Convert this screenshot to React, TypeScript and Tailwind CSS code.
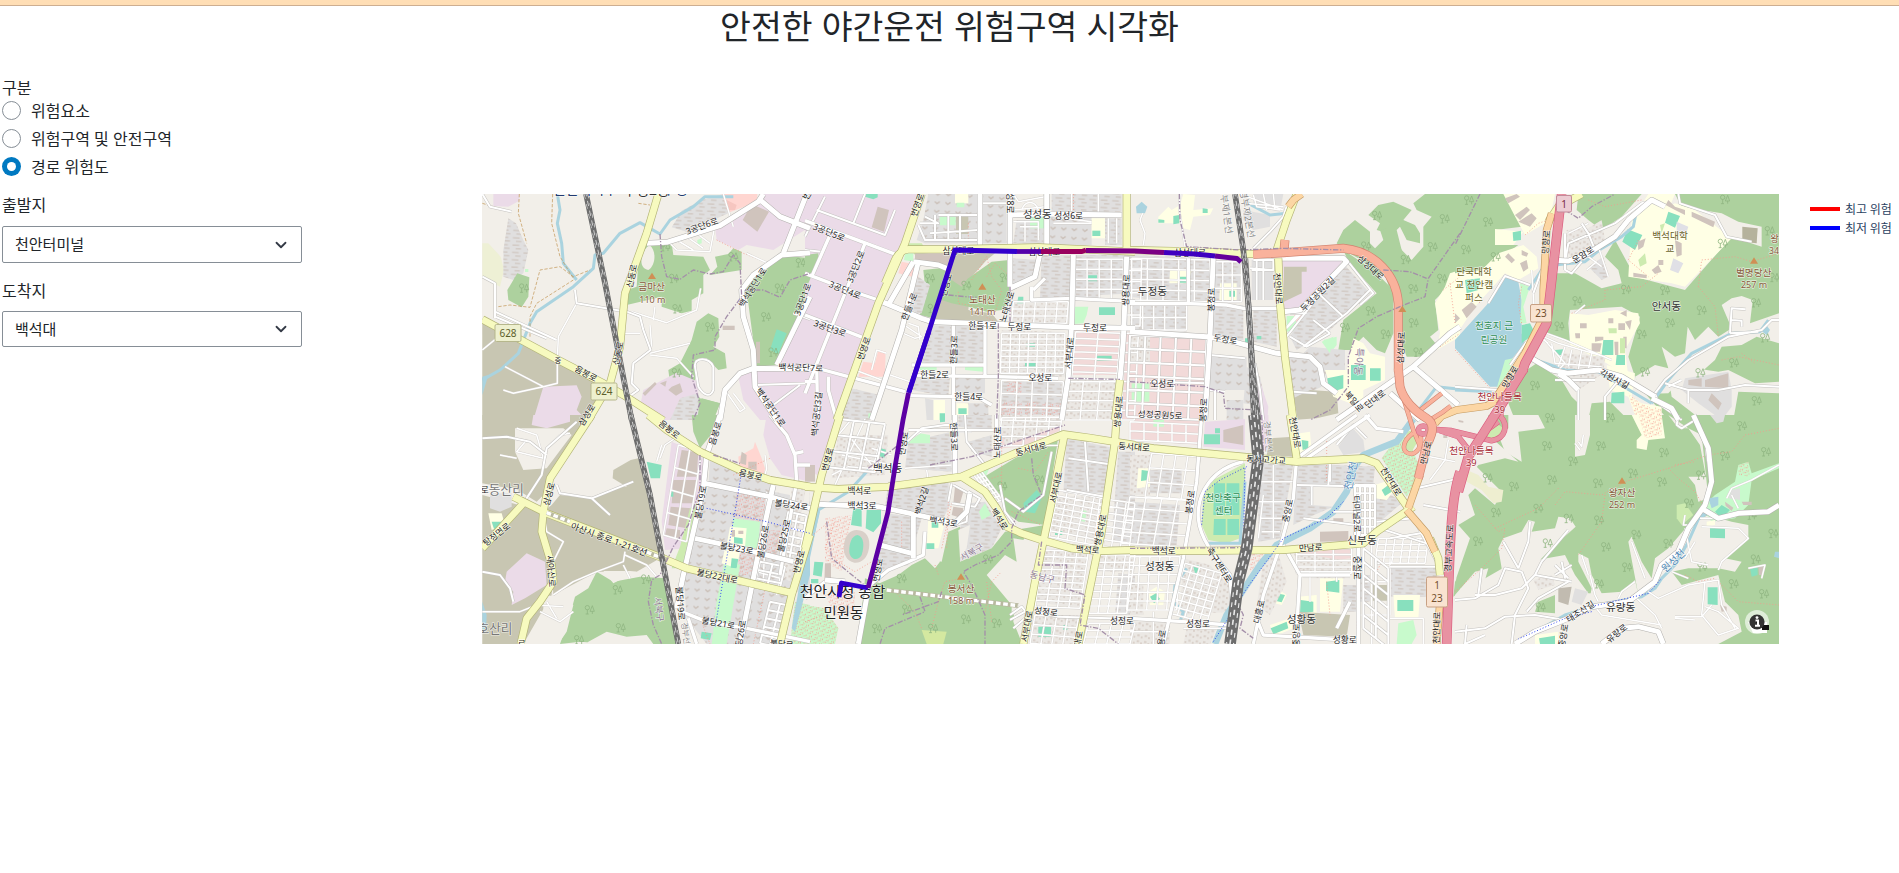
import React from "react";
import { ChevronDown } from "lucide-react";

type Road = [kind: string, d: string];
type Area = [fill: string, d: string];
type Label = [text: string, x: number, y: number, angle?: number, size?: number, color?: string];
type Tile = {
  x: number;
  y: number;
  areas: Area[];
  roads: Road[];
  labels: Label[];
  peaks?: [number, number][];
  trees?: [number, number][];
};

const FOREST = "#add19e";
const BROWN = "#c8c6b2";
const INDUSTRY = "#ebdbe8";
const GREY = "#e0dfdf";
const BLOCKS = "url(#blocks)";
const CHEVRONS = "url(#chevrons)";
const SHOPS = "url(#shops)";
const PARK = "#c8facc";
const PITCH = "#88e0be";
const SCHOOL = "#ffffe5";
const RETAIL = "#ffd6d1";
const PINK = "#f2dad9";
const BUILDING = "#d0c4bd";
const WATER = "#aad3df";
const LAND = "#f2efe9";

// Street lattice spanned by two vectors from a corner.
function grid(x: number, y: number, ux: number, uy: number, vx: number, vy: number, nu: number, nv: number) {
  let d = "";
  for (let i = 0; i <= nu; i++) {
    const a = i / nu;
    d += `M${x + ux * a} ${y + uy * a}l${vx} ${vy}`;
  }
  for (let j = 0; j <= nv; j++) {
    const b = j / nv;
    d += `M${x + vx * b} ${y + vy * b}l${ux} ${uy}`;
  }
  return d;
}

const kinds: { id: string; casing?: string; cw?: number; color: string; w: number; dash?: string }[] = [
  { id: "water", color: WATER, w: 9 },
  { id: "river", color: WATER, w: 20 },
  { id: "path", color: "#f39a8c", w: 2.5, dash: "3 6" },
  { id: "track", color: "#c49a5c", w: 2.2, dash: "10 5" },
  { id: "n", casing: "#d2cfcb", cw: 6.5, color: "#fff", w: 4.5 },
  { id: "m", casing: "#c4c2bf", cw: 9, color: "#fff", w: 6 },
  { id: "r", casing: "#c4c2bf", cw: 13, color: "#fff", w: 10 },
  { id: "t", casing: "#b3b1ae", cw: 18, color: "#fff", w: 15 },
  { id: "s", casing: "#b4b577", cw: 24, color: "#f7fabf", w: 20 },
  { id: "pr", casing: "#c39a62", cw: 23, color: "#fcd6a4", w: 19 },
  { id: "ramp", casing: "#d18470", cw: 14, color: "#f9b29c", w: 11 },
  { id: "mr", casing: "#dc5d7f", cw: 17, color: "#e892a2", w: 14 },
  { id: "tr", casing: "#d18470", cw: 27, color: "#f9b29c", w: 23 },
  { id: "mw", casing: "#dc5d7f", cw: 29, color: "#e892a2", w: 25 },
  { id: "dash", casing: "#b9b9a0", cw: 14, color: "#fff", w: 10, dash: "14 8" },
  { id: "bound", color: "#a48fa9", w: 4, dash: "16 5 4 5" },
  { id: "cycle", color: "#3347ee", w: 3, dash: "3 6" },
  { id: "rail", color: "#6d6d6d", w: 17 },
  { id: "railw", color: "#6d6d6d", w: 35 },
];

const tiles: Tile[] = [
  {
    x: 480,
    y: 190,
    areas: [
      [INDUSTRY, "M40 12H118V32L85 50L40 48Z"],
      ["#eef0d5", "M7 160L25 160L62 200L72 240L60 290L7 262Z"],
      [BLOCKS, "M85 85L108 100L130 150L145 180L130 250L100 270L70 260V180Z"],
      [FOREST, "M112 250L148 262L145 320L125 352L85 330L82 300Z"],
      [BROWN, "M7 400L140 455L380 580L330 690H7Z"],
      [INDUSTRY, "M190 590L290 586L305 620L290 660L320 690H160L175 640Z"],
      [WATER, "M7 560L25 555L7 615Z"],
      [FOREST, "M490 165L535 152L575 160L580 195L670 200L690 240L670 255V310L635 330V362L605 370L545 350V320L440 345V300L470 290L475 215Z"],
      [LAND, "M508 165C530 180 528 225 505 240C470 235 485 180 508 165Z"],
      [FOREST, "M705 200L745 192L760 175L785 185V240L690 255L712 230Z"],
      [FOREST, "M685 370L715 385L718 440L700 470L735 490L740 535L715 540L680 505L645 510V600L660 625L720 640L700 690H635L648 610L615 575L570 578L565 540L600 520L635 450L650 395Z"],
      [FOREST, "M990 205L905 196L860 235L790 290L805 340L830 530L890 525L990 290Z"],
      [PITCH, "M890 418L920 430L895 492L870 480Z"],
      [BUILDING, "M828 455L840 455V520L828 520ZM728 407H764V420H728Z"],
      [BLOCKS, "M605 62L665 30L730 12L745 70L620 125L575 112Z"],
      [INDUSTRY, "M730 90L835 40L850 12H990V110L880 180L800 165L775 180L710 150L705 110Z"],
      [RETAIL, "M725 12H832V35L745 68Z"],
      [BUILDING, "M815 42L867 65L832 125L788 90Z"],
      [INDUSTRY, "M950 400L990 370V690H840L790 630L775 560L800 540H890Z"],
      [INDUSTRY, "M490 600L590 548L655 575L655 690H545L480 650Z"],
      [BUILDING, "M575 590L600 580L608 605L588 617L565 600ZM488 610L525 576L530 582L495 618ZM540 580L560 572L556 590Z"],
      [BLOCKS, "M570 690L600 625L655 610V690Z"],
      [FOREST, "M665 625L720 640L700 690H650Z"],
      ["#f6c6c0", "M740 30L770 45L765 60L740 60Z"],
      [PARK, "M652 150L665 145V160L652 164ZM135 237H145V246H135Z"],
    ],
    roads: [
      ["water", "M232 12L240 60L232 100L245 160L250 220L290 270"],
      ["water", "M7 570L60 540L115 490L150 400L170 365L280 290L340 235L345 195L370 190L420 130L480 98L510 115L540 132L570 90L640 50L675 20H760"],
      ["rail", "M318 12L375 280L455 690"],
      ["s", "M535 12L500 130L435 310L420 470L390 580L325 690"],
      ["s", "M7 388L235 510L370 580L430 615L550 692"],
      ["t", "M500 160L560 157L720 107L835 35L850 12M835 25L900 80L990 115M980 12L910 190"],
      ["t", "M990 188L905 195L820 255L785 300L790 380L820 480L825 590L890 690M990 320L890 525M720 690L735 600L780 550L820 535L990 537"],
      ["m", "M285 300L290 340L440 365L480 380L490 420L512 480L460 520L455 580L475 600L440 625M45 365L230 450M7 260L45 280V385M45 380L200 445M7 12L30 50L95 65"],
      ["n", "M290 340L235 440L232 510V580L190 590L75 530M190 590L100 610L70 600M7 480L80 420M430 430L480 430M510 490L570 475L630 460M455 365L560 398L650 360L662 295M510 495L590 505L640 560M560 150L590 180L690 185L702 120M590 150L640 180M620 140L670 175M650 130L690 160M510 405L515 470M520 390L525 350"],
      ["m", "M645 530C640 500 690 500 700 530V600C690 625 670 615 655 590ZM830 585L990 580M860 660L960 585M940 370L990 388"],
      ["n", "M730 12L760 110M800 190L865 220L840 235M735 600L780 665L795 655L760 610"],
      ["track", "M118 12L115 70L140 160M218 12L215 100L240 200L280 265M55 350L90 345L150 352L180 240L240 230L280 260L330 240M150 440V380L170 340L280 270M7 40L80 62M475 40L510 45"],
      ["path", "M710 150L740 165L790 190L830 205"],
      ["bound", "M540 132L545 200L560 260L600 268L640 240L690 252L730 245L760 195L780 220L785 320L740 380L705 440V480L640 495L635 560L660 640L640 690M795 300L850 300L900 322L930 270L990 250"],
    ],
    labels: [
      ["3공단6로", 666, 108, -20],
      ["산동로", 455, 258, -78],
      ["산동로", 414, 490, -78],
      ["음봉로", 318, 551, 28],
      ["백석공단1로", 818, 292, -58],
      ["3공단1로", 968, 328, -70],
      ["백석공단7로", 962, 533, 2],
      ["백석공단1로", 872, 652, 55],
      ["중", 234, 511, 0, 22],
      ["번영로", 992, -4, -60],
      ["금마산", 515, 291, 0, 29, "#8a5a3a"],
      ["110 m", 517, 328, 0, 27, "#8a5a3a"],
      ["부성2동", 500, 0, 0, 42, "#333"],
      ["천안서북구", 315, -4, 0, 42, "#223a70"],
      ["부성", 585, -4, 0, 42, "#223a70"],
    ],
    peaks: [[516, 258]],
    trees: [[132, 294], [556, 170], [582, 265], [592, 356], [690, 410], [590, 548], [760, 200], [962, 218], [899, 294], [858, 380], [880, 486]],
  },
  {
    x: 480,
    y: 415,
    areas: [
      [BROWN, "M7 0H340L235 160L200 230L170 260L105 220L60 215L7 205Z"],
      [BROWN, "M7 240L190 290L185 350L220 440L215 540L180 600L130 687H7Z"],
      [LAND, "M105 40H250L275 60L200 160L130 165L105 110Z"],
      [INDUSTRY, "M160 0H270V20L200 40L155 30Z"],
      [LAND, "M345 0H450L475 130L400 165V190L440 210L350 245L235 240L240 150Z"],
      [BROWN, "M240 240L330 250L430 215L500 220L540 430L470 470L350 470L220 540L215 450L190 340V290L215 270Z"],
      [BROWN, "M452 135L475 130L515 250L440 215L398 190L400 165Z"],
      [LAND, "M470 0H510L590 80L550 330L520 260Z"],
      [PITCH, "M500 140L545 150L540 190H512Z"],
      [INDUSTRY, "M575 80L670 120L665 230L625 400L555 405L545 320Z"],
      [BUILDING, "M605 105L655 112L650 185H590ZM580 195H648L640 265H575ZM572 275L635 280L620 340L565 330ZM560 340L600 345V370L555 360Z"],
      [PITCH, "M572 228H580V245H572Z"],
      ["#cdebb0", "M630 280L655 260L610 460H575L600 395Z"],
      [INDUSTRY, "M80 470L140 415L195 440L200 510L135 550L95 570L100 530L75 500Z"],
      ["#e0dfdf", "M30 235H95V275L60 290L30 280Z"],
      [SCHOOL, "M25 295H65L75 330L35 345Z"],
      [PITCH, "M35 320H65V335L42 342Z"],
      [WATER, "M7 560L20 600L18 650L7 640Z"],
      [FOREST, "M350 470L400 500L480 485L560 490L590 687H390L300 680L240 687L270 600L285 545L325 520Z"],
      [LAND, "M370 468H450L470 470L400 505ZM325 680L380 650L440 665L500 660L520 687H320Z"],
      [LAND, "M190 540L240 545L280 570L260 650L235 687H140L190 590Z"],
      [FOREST, "M635 0H715L700 50L660 100L640 50Z"],
      [RETAIL, "M775 125L820 100L825 80L845 130L855 160L850 190L780 180Z"],
      [BUILDING, "M785 110L800 120L798 150L780 145ZM805 140H830V165L805 160Z"],
      [INDUSTRY, "M860 0H990V200L905 180L870 130L850 60Z"],
      [CHEVRONS, "M690 130L780 170L990 225V540L620 455L650 330L685 215Z"],
      [CHEVRONS, "M610 470L940 545L900 687H680L620 610Z"],
      ["url(#dots)", "M770 215L880 245L865 325L765 310ZM760 310L835 335L825 480L770 480ZM865 345L900 345L890 420L840 420Z"],
      [PARK, "M760 310L840 320L835 400H790L750 400ZM735 430L780 450L740 687H695L710 560Z"],
      [SCHOOL, "M750 335L800 340L795 395L740 390ZM735 400L780 410L770 460L725 445Z"],
      [PITCH, "M762 366L788 370V387L762 385ZM755 430L775 432L770 460L752 458ZM665 650L695 655L690 675L662 670Z"],
      [BUILDING, "M755 345H765V365H755ZM775 347H790V357H775Z"],
      [LAND, "M880 190L990 225L985 360L920 420L930 240L880 230Z"],
      [SHOPS, "M940 190L980 205L930 500L900 480Z"],
      [PARK, "M945 560L990 570V687H930Z"],
      ["url(#dots)", "M945 560L990 570V687H930Z"],
      [WATER, "M980 390H990V480L945 650L935 640Z"],
    ],
    roads: [
      ["m", "M7 70L80 65L150 80L200 120M230 210L240 235L335 250L460 200M335 250L390 300M290 20L200 100L185 180L130 265M7 470L60 480L90 520L100 560"],
      ["n", "M110 40L170 60L190 130L110 110L140 75M110 130L60 120M200 100L240 60L270 55M190 290L200 350L250 380L220 440M7 590L120 590L170 570L250 575M180 590L240 620L280 590M200 560L230 610M435 410L430 440L350 470L280 500L220 540M435 420L500 450L530 485M430 450L450 490M540 130L555 90L600 60M530 140L545 90"],
      ["n", grid(595, 90, 70, 20, -45, 270, 2, 4)],
      ["n", "M855 120L860 160L850 200M620 470L720 490M860 230L850 500M830 470L900 490L890 540"],
      ["m", grid(840, 440, 75, 15, -18, 75, 2, 3)],
      ["m", grid(870, 560, 60, 12, -30, 125, 2, 5)],
      ["m", grid(925, 290, 55, 12, -25, 140, 2, 6)],
      ["rail", "M452 0L510 240L595 687"],
      ["s", "M335 0L210 190L190 290L185 350L215 450L220 500L180 560L140 610L122 687"],
      ["s", "M7 400L130 265M100 245L200 295L550 430L620 460L940 535"],
      ["s", "M505 0L560 45L660 110L780 165L870 195L990 215"],
      ["s", "M990 360L935 540L900 687"],
      ["dash", "M200 293L270 320M460 395L560 435"],
      ["t", "M720 0L680 120L670 220L640 350L610 480L590 580M675 205L870 245L990 280M645 370L760 395L940 440M880 210L830 440L790 640L780 687"],
      ["r", "M605 590L680 620L800 640L990 680M870 0L920 60L945 120L950 200M970 110L945 115M950 150L990 150M950 200L900 480M625 610L650 687"],
      ["path", "M760 180L870 130M860 500L820 687M660 610L690 687"],
      ["cycle", "M785 170L765 290L740 430L705 640M680 280L860 320L990 355"],
      ["bound", "M660 120V220L625 330L580 395L540 480L515 495L505 560L520 630L545 687M700 120L780 145"],
    ],
    labels: [
      ["삼성로", 320, 0, -58],
      ["삼성로", 207, 237, -75],
      ["새아산로", 213, 468, 85],
      ["탕정면로", 50, 358, -38],
      ["로", 14, 225],
      ["동산리", 79, 222, 0, 38, "#777"],
      ["호산리", 45, 639, 0, 38, "#777"],
      ["아산시 종로 1-21호선", 387, 373, 20, 27],
      ["음봉로", 568, 43, 38],
      ["음봉로", 812, 180, 13],
      ["음봉로", 706, 55, -72],
      ["불당19로", 662, 262, -80],
      ["불당24로", 934, 270, 8],
      ["불당26로", 849, 380, -80],
      ["불당25로", 912, 362, -77],
      ["불당23로", 770, 400, 10],
      ["불당22대로", 712, 484, 12],
      ["불당19로", 601, 565, 85],
      ["불당21로", 715, 624, 10],
      ["불당26로", 780, 665, -80],
      ["불당로", 905, 687, 5],
      ["번영로", 957, 440, -75],
      ["서북구", 537, 583, 83, 27, "#8e7a94"],
      ["경부선", 617, 655, 82, 24, "#888"],
      ["로", 125, 688],
    ],
    trees: [[498, 492], [413, 524], [329, 584], [422, 638], [297, 674]],
  },
  {
    x: 805,
    y: 190,
    areas: [
      [INDUSTRY, "M0 12H350L300 170L220 340L90 690H0Z"],
      [FOREST, "M0 195L40 190V210L10 280H0Z"],
      [BUILDING, "M218 50L252 60L237 125L200 112Z"],
      [PITCH, "M175 12H218V22L205 28L180 20Z"],
      [CHEVRONS, "M370 12H525V160H360L335 150L355 90Z"],
      [SCHOOL, "M450 12H490V40H450Z"],
      [PARK, "M404 80H452V106H404ZM455 38H478V52H455Z"],
      [BROWN, "M453 80H490V132H453Z"],
      [CHEVRONS, "M530 12H605V160H530Z"],
      [CHEVRONS, "M735 80H860V165H735Z"],
      [BLOCKS, "M740 12H950V65H740Z"],
      [BLOCKS, "M635 90H715V160H625Z"],
      [PARK, "M675 80H718V115H675Z"],
      [SCHOOL, "M860 85H900V145H860Z"],
      [PITCH, "M862 122H886V138H862Z"],
      [BLOCKS, "M900 85H950V165H900Z"],
      ["#cdebb0", "M300 160L350 160L370 190L330 195Z"],
      [RETAIL, "M290 215L340 225V265L280 250ZM220 480L260 490L240 560L160 560L175 515L210 520Z"],
      [PARK, "M300 190H325V215L297 210Z"],
      [BUILDING, "M330 190H435L440 225H330Z"],
      [FOREST, "M355 240L430 232L385 385L345 375L360 290Z"],
      [BLOCKS, "M340 260L375 285L350 370L335 370L310 350Z"],
      [BROWN, "M440 190H570L545 210L500 260L490 360L560 370L580 395H385Z"],
      [FOREST, "M490 265L560 215L612 210V335L590 360L545 365L490 350L440 340L410 330L430 245L440 260Z"],
      [BROWN, "M440 190H540L500 250L470 290L425 260Z"],
      [BLOCKS, "M620 205L700 210V265L620 290Z"],
      [BLOCKS, "M710 195H990V310L705 325Z"],
      [LAND, "M245 345L345 395L300 600L240 560Z"],
      [BLOCKS, "M370 405L535 410V525L340 525Z"],
      [LAND, "M540 410H580V560H540Z"],
      [BLOCKS, "M330 560H435L430 620L320 600Z"],
      [CHEVRONS, "M450 565H540V610L450 610ZM480 640H550V690H480Z"],
      [PARK, "M345 530H395V540H345ZM480 528H535V545L480 540Z"],
      [SCHOOL, "M385 630H420V690H385ZM455 640H490V690H455Z"],
      [PITCH, "M404 670H420V690H404ZM460 655H485V672H460ZM640 320L655 320V345H635Z"],
      [BLOCKS, "M120 590L225 615L200 690H90Z"],
      [PARK, "M190 670H205V685H190Z"],
      [SHOPS, "M590 420L780 425V560H590Z"],
      [PITCH, "M660 515H692V535H660ZM665 460H690V470H665Z"],
      [SHOPS, "M620 340H790V400H620Z"],
      [BLOCKS, "M780 280H880V325H780Z"],
      [PARK, "M808 350H850L845 375L835 400L808 402Z"],
      [PITCH, "M882 352H930V375H882ZM848 256H876V274H848Z"],
      [PINK, "M810 420L945 425L940 555H800Z"],
      [PINK, "M965 425H990V690H950Z"],
      [PITCH, "M875 497H920V512H875ZM872 580H915V625H868Z"],
      [BLOCKS, "M585 575L770 575V690H585Z"],
      ["url(#dots)", "M605 570H650V615H605ZM585 635H650V675H585ZM660 635H700V680H660ZM710 640H770V680H710Z"],
      [SHOPS, "M780 570H930V690H780Z"],
      [GREY, "M360 625L385 630V690H365Z"],
    ],
    roads: [
      ["m", "M0 140L60 20M35 60L240 135L270 60M145 100L180 12M0 180L50 185"],
      ["r", "M0 92L130 140L290 200M180 160L0 610M75 135L20 260M0 250L130 300L220 330M0 375L180 445M35 520L38 690M0 525L130 560L300 605M0 575L40 575M70 560L70 600L95 690"],
      ["t", "M340 215L290 420L200 690M230 335L350 385L380 395M325 215L400 225L425 235M250 345L325 215"],
      ["n", "M290 400L350 440L330 445L295 430M310 400L340 410L345 450M200 540L215 480L245 490M240 550L315 575M150 540L230 570"],
      ["m", "M345 100L400 100L360 80M400 75H525M375 130L520 120M340 105L360 150H520M390 75V150M430 75V150M465 75V150M605 40H530"],
      ["n", "M625 12L640 35L720 20M625 60L720 50M650 60C660 30 690 30 700 60M745 80L860 95M745 100H860M880 12V80M800 12V70M910 85V160M935 85V160M625 95H700V150M645 110H700M660 95V155"],
      ["t", "M525 12V165M615 12V290M725 12V165M615 75L740 72L950 75M615 295L690 260L705 190"],
      ["t", "M385 395L560 402L800 412L990 415M805 195L800 400L790 560L770 690M965 200L955 450L945 570"],
      ["n", grid(590, 430, 190, 0, -4, 120, 7, 7)],
      ["n", grid(625, 335, 165, 0, -5, 65, 5, 3)],
      ["n", grid(810, 208, 145, 0, 0, 120, 4, 4)],
      ["n", grid(970, 208, 40, 0, -5, 200, 1, 6)],
      ["n", grid(812, 425, 135, 5, -12, 140, 2, 7)],
      ["n", grid(590, 570, 185, 5, -5, 120, 4, 3)],
      ["n", grid(785, 575, 150, 0, -10, 115, 3, 4)],
      ["n", grid(960, 430, 40, 0, -12, 260, 1, 9)],
      ["r", "M320 525H540M330 557L580 560M310 617L440 620L520 622L560 645M445 405V690M540 410V560M580 560L760 565M680 290V330L800 325L990 335M685 300L720 265"],
      ["s", "M965 12V175M945 570L930 690"],
      ["s", "M350 12L300 160L220 340L95 690"],
      ["s", "M240 280L270 210C280 190 290 180 310 178L420 178L700 172L990 185"],
      ["path", "M500 270L545 200L560 260L590 300L570 370L520 350L460 340V300M545 260L570 220L605 250M580 400L540 380M490 100V155M805 12V60"],
      ["bound", "M580 400V560L575 690M790 565L945 568M615 290V400M430 315L480 320L520 322"],
    ],
    labels: [
      ["3공단5로", 72, 127, 22],
      ["3공단2로", 152, 230, -68],
      ["3공단4로", 120, 300, 22],
      ["3공단3로", 75, 415, 20],
      ["번영로", 337, 45, -70],
      ["번영로", 177, 475, -70],
      ["한들1로", 313, 350, -68],
      ["번영로", 423, 285, -75],
      ["한들1로", 533, 408],
      ["두정로", 643, 411],
      ["두정로", 870, 414],
      ["노태산로", 606, 350, -73],
      ["한들3로", 447, 479, -88],
      ["서부대로", 793, 489, -85],
      ["쌍용대로", 963, 300, -88],
      ["오성로", 706, 564],
      ["한들2로", 389, 556],
      ["한들4로", 491, 622],
      ["쌍용대로", 940, 665, -85],
      ["백석공단3길", 35, 672, -84],
      ["삼성대로", 460, 183],
      ["삼성대로", 718, 187],
      ["성성6로", 791, 78],
      ["성성8로", 614, 27, 90],
      ["성성동", 697, 72, 0, 31, "#333"],
      ["노태산", 532, 328, 0, 29, "#8a5a3a"],
      ["141 m", 532, 364, 0, 27, "#8a5a3a"],
    ],
    peaks: [[532, 290]],
    trees: [[375, 264], [484, 286], [599, 262], [383, 355]],
  },
  {
    x: 805,
    y: 415,
    areas: [
      [INDUSTRY, "M0 0H110L40 180L0 170Z"],
      [BUILDING, "M0 150H30V200H0Z"],
      [SHOPS, "M100 60L250 60L240 180L80 190Z"],
      [PITCH, "M228 100L243 104L238 128L224 124ZM405 0H420V20L405 22Z"],
      [BLOCKS, "M310 80L440 50V170L300 160Z"],
      [PARK, "M300 90L345 55L375 60V85L310 85Z"],
      [BLOCKS, "M460 0H560V45L460 35ZM490 80L560 60V125L500 110Z"],
      [PINK, "M590 0H770V45L650 95L590 100Z"],
      [SHOPS, "M580 0H770V30L600 90Z"],
      [BLOCKS, "M250 200L430 195L435 270L415 310L240 280Z"],
      [BUILDING, "M445 275L475 280L470 310L440 300ZM450 215L475 230L465 265H445Z"],
      [BLOCKS, "M490 265L540 260L590 340L560 400L460 440L465 340Z"],
      [PARK, "M540 265L558 300L530 315L522 290ZM520 170L555 155L540 190Z"],
      [FOREST, "M530 190L630 130L760 65L720 330L640 320L600 290L590 240L560 225Z"],
      [FOREST, "M600 350L720 330L715 380L660 360L635 445L600 430L580 470L550 480L630 570L625 620L645 670V687H160L190 520L280 480L320 450L360 430L410 440L430 350L465 335V440L560 400Z"],
      [FOREST, "M180 490L240 510L190 520L200 560L240 530L200 640L160 687Z"],
      [LAND, "M625 370L690 380L700 470L680 580L620 600V570L545 480L600 420L635 440Z"],
      [LAND, "M360 430L390 410L405 440L390 460ZM460 345L495 330L485 400L465 430Z"],
      [PITCH, "M655 265L695 225L712 245L690 295L660 290Z"],
      [PITCH, "M185 285L228 285V325L205 352L182 340ZM145 280L170 280V335L138 330Z"],
      ["url(#dots)", "M60 310L140 300L110 470L60 440Z"],
      [SCHOOL, "M370 310L420 320L400 400L365 400Z"],
      [PITCH, "M364 385H388V402H364ZM380 320H400V338H380Z"],
      [BLOCKS, "M245 295L350 310L310 450L210 470Z"],
      [PITCH, "M28 440L55 442L50 485L24 480ZM18 492H40V505H18Z"],
      [BUILDING, "M60 445H78V500H58Z"],
      [PARK, "M0 570L60 580L100 640L90 687H0Z"],
      ["url(#dots)", "M0 570L60 580L100 640L90 687H0ZM60 540L150 520V600H90Z"],
      ["#d4e8a0", "M350 645L425 650L415 687H365Z"],
      [WATER, "M0 400L40 280L45 290L10 440Z"],
      [BLOCKS, "M785 70L930 100L905 235H775Z"],
      [SHOPS, "M760 240L900 250L870 380L740 350Z"],
      [PARK, "M828 285L845 288L840 320L825 318ZM935 310H950V328H935Z"],
      [SHOPS, "M720 400L850 410L820 580L690 560Z"],
      [BLOCKS, "M940 475L990 480V600H930Z"],
      [SHOPS, "M890 400H990V470H870Z"],
      [SHOPS, "M680 600H830L815 687H670Z"],
      [PITCH, "M700 635H738V665H700ZM775 630H787V645H775ZM750 348H772V360H750Z"],
      [BLOCKS, "M940 110H990V380H920Z"],
      ["#d9d0c9", "M155 345C185 345 197 370 192 400C187 430 170 445 148 443C125 440 112 415 118 385C122 360 135 345 155 345Z"],
      [PITCH, "M158 360C178 365 178 395 170 420C160 440 135 435 133 410C132 385 140 362 158 360Z"],
    ],
    roads: [
      ["water", "M190 165L130 230L40 285L10 430"],
      ["m", grid(100, 12, 140, 15, -30, 145, 3, 3)],
      ["n", "M130 60L200 150M180 12L90 210M240 30L200 170M110 120L260 150M80 180L130 155L270 165M140 12L100 60M200 100L260 120M300 160L440 150M365 165L370 200M300 80L350 50L430 45M440 50H500"],
      ["m", "M290 95L350 40L420 30H450M310 45H575M480 0L485 80L540 150"],
      ["n", grid(590, 8, 180, -2, -8, 85, 5, 3)],
      ["n", grid(505, 178, 25, -8, 62, 85, 3, 7)],
      ["m", "M440 205L430 260M445 210L490 235L485 320L440 335M440 265L510 275L525 250L490 230M585 210L600 290L630 330M600 250L655 290L715 240L740 110"],
      ["t", "M450 0V180M40 268L220 275L360 305L450 325L485 290L495 235M325 300V430M225 390L320 415M190 520L160 687M60 495L120 500"],
      ["r", "M195 510L250 465L310 440L355 420L360 350M0 550L60 500M575 0V100"],
      ["s", "M105 0L50 180L0 400"],
      ["s", "M0 215L100 222L250 215L470 185L630 115L775 58L850 68L990 90"],
      ["s", "M470 185L540 230L575 280L605 335L650 355L710 375L800 400L880 408L990 405"],
      ["s", "M778 60L740 260L690 500L655 687M935 0L930 80L890 350L820 687"],
      ["dash", "M245 525L640 572"],
      ["n", grid(760, 225, 135, 25, -28, 140, 5, 8)],
      ["n", grid(715, 405, 135, 5, -25, 170, 4, 9)],
      ["n", grid(885, 250, 105, 15, -18, 140, 4, 7)],
      ["n", grid(875, 420, 115, 0, -25, 175, 4, 8)],
      ["n", grid(690, 600, 130, 10, -15, 85, 4, 3)],
      ["n", grid(850, 625, 140, 0, -15, 62, 4, 3)],
      ["m", "M790 130L930 150M840 80L850 230M785 225L900 245M690 590L760 605L990 612M615 600L650 575L670 600M615 615L660 590M625 640L660 610"],
      ["path", "M590 80V240L620 270M560 190L590 180M640 160L690 170L730 110M620 290L710 330M390 450L400 480M270 530L330 590L350 640M470 490L420 500L400 560L380 640M540 590L560 500L590 470M290 320V400M430 260L425 400M0 620L60 600M440 265L410 400"],
      ["path", "M560 620L545 500M90 320L60 400L100 440L150 470L200 440M0 380L60 330"],
      ["bound", "M190 160L280 90M375 150L500 125L780 30M680 130L685 180L710 240L640 290L620 340L620 380L580 420L510 450L475 470L500 510L540 600V687M65 320L80 430L190 520M345 545L360 590L240 640L225 687M410 530L400 560L290 600M710 380L700 450H785L780 520L840 540L825 630L880 640L940 687"],
    ],
    labels: [
      ["번영로", 68, 133, -75],
      ["백석로", 163, 229],
      ["백석3로", 171, 272],
      ["백석3로", 416, 320, 8],
      ["백석2길", 350, 257, -73],
      ["백석로", 583, 312, 58],
      ["백석로", 848, 404, 5],
      ["한들3로", 447, 65, 88],
      ["노태산로", 577, 82, -88],
      ["동서대로", 678, 102, -15],
      ["서부대로", 753, 217, -78],
      ["서부대로", 666, 634, -80],
      ["쌍용대로", 886, 345, -78],
      ["쌍용대로", 816, 695, -80],
      ["성정로", 723, 590, 8],
      ["성정로", 951, 617],
      ["번영로", 295, 85, -80],
      ["번영로", 218, 465, -80],
      ["백석동", 248, 158, 0, 32, "#333"],
      ["서북구", 500, 411, -30, 27, "#8e7a94"],
      ["동남구", 712, 486, 15, 28, "#8e7a94"],
      ["봉서산", 468, 522, 0, 29, "#8a5a3a"],
      ["158 m", 468, 558, 0, 27, "#8a5a3a"],
      ["천안시청 종합", 113, 529, 0, 44.5, "#222"],
      ["민원동", 115, 592, 0, 43, "#222"],
    ],
    peaks: [[468, 485]],
    trees: [[592, 213], [704, 194], [290, 490], [549, 432], [306, 582], [483, 612], [575, 624], [216, 640], [384, 640]],
  },
  {
    x: 1130,
    y: 190,
    areas: [
      [SCHOOL, "M85 80L115 50L125 60L150 45L160 12L195 15L190 60L250 55L240 75L190 80L180 120L160 115L150 100L85 100Z"],
      [PITCH, "M130 78L148 75V100L130 103ZM218 55L233 57V69H218ZM85 88L103 90V98H85Z"],
      [WATER, "M18 50L35 35L52 50L45 70H20Z"],
      [FOREST, "M640 120L675 90L720 125V160L735 175L740 230L765 245L740 260L695 210L640 180L620 160Z"],
      [FOREST, "M715 75L745 45L790 35L845 60L820 90L855 105L870 130L870 160L830 150L810 110L800 120L815 180L840 220L790 180L775 130L740 120L750 100Z"],
      [FOREST, "M850 40L885 12H990V240L960 255L945 300L915 330L925 420L900 440L925 470L880 500L830 500L800 420L790 330L760 240L735 215L730 180L760 150L750 120L770 115L800 150L815 180L845 210L880 170L880 110L905 80L860 60Z"],
      [FOREST, "M640 180L730 240L790 300V430L765 490L740 480L700 440L660 480L625 480L640 390L740 310L655 215Z"],
      [INDUSTRY, "M455 205H640L610 260L510 360H460Z"],
      [BROWN, "M462 230H530V245H515V310L462 335Z"],
      [PARK, "M470 378H500V420L470 425ZM580 450L620 440V465L600 490Z"],
      [RETAIL, "M490 370L540 350L500 400Z"],
      [BLOCKS, "M0 195L250 205V330L160 340L0 320Z"],
      [BLOCKS, "M0 345L170 340V425L0 420Z"],
      [BLOCKS, "M240 345H340V450L250 440Z"],
      [BLOCKS, "M250 210H330V340H250Z"],
      [GREY, "M365 210H430V330H365Z"],
      [BLOCKS, "M370 360H440V470L370 455Z"],
      [SCHOOL, "M120 240H185L175 280H118ZM270 280H320V330H268Z"],
      [PITCH, "M150 260H173V278H150ZM298 302H315V320H298Z"],
      [PINK, "M0 435L235 445L220 690H0Z"],
      [SHOPS, "M0 440H60V520H0Z"],
      [PARK, "M5 580H58V635H5Z"],
      [CHEVRONS, "M240 500L350 500V600L235 600ZM460 500L560 510L575 590L490 630ZM290 630H340V690H290Z"],
      [CHEVRONS, "M540 470L645 480V570L600 590L575 530L520 490Z"],
      [CHEVRONS, "M350 530L390 560L410 650L340 640Z"],
      [INDUSTRY, "M385 560L415 650L412 690H380Z"],
      [BROWN, "M490 625L540 600L620 605L625 670L560 685L490 690Z"],
      [SCHOOL, "M670 445L700 460L720 490L765 500V570L700 600V640L660 640L610 620L585 540L650 540Z"],
      [PITCH, "M592 565L640 555V595L615 603L595 590ZM720 535H752V572H720ZM663 525H707V570H663Z"],
      [BLOCKS, "M560 300L640 220L720 310L600 420L500 480L480 440Z"],
      [PARK, "M575 455L610 440L600 490Z"],
      [SCHOOL, "M945 290L960 250L990 240V440L920 480L930 430L915 340Z"],
      [WATER, "M975 455L990 440V490Z"],
      [GREY, "M370 12H460L450 65L370 50ZM340 60L420 75V110L370 120L340 90Z"],
      [PITCH, "M345 445H360V460H345ZM380 438H394V448H380Z"],
    ],
    roads: [
      ["n", "M40 165L45 130L30 90L38 70M150 12L148 60L165 170M330 12L460 60M370 15L380 50L450 60M400 12L410 60M430 12L435 60M345 40L460 50"],
      ["water", "M355 40L420 75L470 70M830 665L870 655L920 590L990 598"],
      ["m", "M370 175L420 125L460 80L470 50M370 210H430V240L360 235M380 210V330M400 210V330M365 240H430M480 370L530 370M550 390L600 430"],
      ["n", grid(5, 205, 235, 5, 0, 125, 5, 4)],
      ["n", grid(5, 345, 165, 0, 0, 75, 5, 2)],
      ["n", grid(250, 215, 85, 0, 0, 120, 3, 3)],
      ["m", grid(0, 435, 230, 10, -10, 245, 5, 6)],
      ["n", grid(565, 295, 75, -75, -110, 135, 1, 4)],
      ["m", "M650 210L730 310L690 345M650 210L470 440M560 305L640 380M520 470L650 370L720 300M480 440L530 470L600 430"],
      ["m", "M240 495L345 505M240 600L285 605M255 600V690M60 575L230 580M375 520L390 600L400 690M490 605L560 610M470 510L500 690"],
      ["t", "M0 425L230 440L310 455L440 490L540 500L570 530L580 580L620 610M250 200L240 440L225 690M455 205H640L650 215L510 360L460 365"],
      ["r", "M0 340L160 340L290 345L340 355L445 355M175 205V340"],
      ["t", "M620 690L850 530L960 430L990 410M850 530L985 645M780 610L870 690"],
      ["s", "M440 180L470 90L500 12M0 180L230 185L370 192M445 205L450 340L465 500L490 690"],
      ["pr", "M475 50L490 30L515 12"],
      ["tr", "M370 193L460 188L640 175C740 185 800 260 805 340V545M462 180L465 150"],
      ["rail", "M315 12L340 180L355 340L362 450L370 560L385 690"],
      ["rail", "M346 205L355 340L362 450L366 560L372 690"],
      ["path", "M940 300L990 260M930 470L990 430M960 280L975 400"],
      ["bound", "M148 12L150 90L170 170L330 180L460 175L640 180M990 130L895 265L885 320L810 350L740 380L685 415L655 500V590L600 660L540 690M760 240L840 245L890 265M0 575L225 590L280 610L285 655L380 660"],
    ],
    labels: [
      ["삼성대로", 180, 190],
      ["삼성대로", 722, 233, 42],
      ["삼성대로", 813, 473, -87],
      ["두정동", 67, 302, 0, 32, "#333"],
      ["봉정로", 244, 329, -88],
      ["봉정로", 220, 660, -87],
      ["두정로", 286, 448, 10],
      ["오성로", 97, 582],
      ["성정공원5로", 90, 675, 3],
      ["천안대로", 444, 296, 86],
      ["두정공원2길", 563, 312, -45],
      ["북일로", 672, 635, 50],
      ["단대로", 735, 627, -38],
      ["경부제1본선", 288, 60, 82, 28, "#888"],
      ["경부제2본선", 352, 72, 80, 28, "#888"],
      ["특아동", 687, 515, 95, 30, "#8e7a94"],
    ],
    peaks: [[817, 357]],
    trees: [[741, 76], [944, 86], [708, 168], [908, 170], [827, 208], [936, 265], [850, 296], [722, 362], [851, 398], [767, 432], [865, 486], [645, 412]],
  },
  {
    x: 1130,
    y: 415,
    areas: [
      [PINK, "M0 12H215V90L0 75Z"],
      [PARK, "M70 15H102V35H70Z"],
      [INDUSTRY, "M225 20L345 12V105L220 95Z"],
      [PITCH, "M222 58H270V88H222ZM255 40H270V55H255Z"],
      [BUILDING, "M280 45L340 30V90L280 80Z"],
      [INDUSTRY, "M395 0H415L420 100L395 110Z"],
      [BROWN, "M420 70L490 65V125L410 120Z"],
      [SCHOOL, "M475 60L540 50L545 110L510 115Z"],
      [PITCH, "M515 75L535 78V100L518 105Z"],
      [BLOCKS, "M60 165H155V235H60Z"],
      [SHOPS, "M0 120H60V240H0Z"],
      [SCHOOL, "M25 160H60V215L20 220Z"],
      [PITCH, "M35 165L58 168L55 195L33 198Z"],
      [BLOCKS, "M0 260L150 270L140 390H0Z"],
      ["#cdebb0", "M345 145L250 195L220 240L215 330L235 375L290 385L330 370L345 250Z"],
      [PITCH, "M252 205H285V300H250ZM290 205H328V300H288ZM252 312H287V360H250ZM292 312H327V360H292Z"],
      [BLOCKS, "M385 145L490 150L450 370L385 380Z"],
      [BLOCKS, "M500 145L735 155L730 210L545 210V270L610 275L530 310L490 330Z"],
      [GREY, "M665 35L700 75L705 110L640 120L625 95Z"],
      [BUILDING, "M570 350L655 348V378L570 380ZM610 310H640V325H610Z"],
      [BLOCKS, "M735 215L820 260L750 320L735 310Z"],
      [SCHOOL, "M735 210L780 195L790 230L770 255L735 250Z"],
      [PITCH, "M755 225L775 210L785 230L765 243Z"],
      [PARK, "M830 60L875 170L830 245L755 130L780 95Z"],
      ["url(#dots)", "M830 60L875 170L830 245L755 130L780 95Z"],
      [PINK, "M490 405L665 395V430L560 440L510 475Z"],
      [BLOCKS, "M780 455L920 460V545H780Z"],
      [SCHOOL, "M570 490L580 480L640 490L630 590L570 590ZM415 530L425 510L470 540L455 570L415 560ZM420 630L480 610L490 640L430 665ZM505 545L560 540V605L505 600Z"],
      [PITCH, "M588 500L628 495V533L588 528ZM512 555L550 560V590L510 595ZM422 640L470 620L475 640L430 658ZM420 530L465 540L455 562L425 555Z"],
      [BROWN, "M505 590L660 600L650 665L520 660ZM727 510H773V557H727Z"],
      [SCHOOL, "M790 540H870L865 610H795Z"],
      [PITCH, "M802 555H850V588H802Z"],
      [PARK, "M805 625L850 615L860 660L845 687H800Z"],
      [SHOPS, "M160 430L240 450L305 520V590L150 600Z"],
      [SCHOOL, "M55 530L80 515L105 530L100 570L60 570Z"],
      [PITCH, "M60 545L78 535L90 552L72 565ZM190 455L205 450L210 470L195 475Z"],
      [SHOPS, "M0 510H40V600H0Z"],
      [SHOPS, "M490 410L660 440V490H520Z"],
      ["url(#dots)", "M355 415L400 410V460L360 470Z"],
      [SHOPS, "M0 620H120V687H0ZM170 640H260L240 687H160Z"],
      [SHOPS, "M400 440L440 400L470 500L420 600L380 570Z"],
      [FOREST, "M975 500L990 470V530L970 545Z"],
      [BLOCKS, "M640 510H680V590H640ZM690 480H720V560H690Z"],
    ],
    roads: [
      ["river", "M850 12L800 80L700 120L670 160L650 230L610 290L540 340L440 390L390 450L350 510L290 600L255 687"],
      ["water", "M170 460L135 510L130 560L160 590L150 620M235 385H330L345 200"],
      ["n", grid(0, 20, 210, 10, 0, 55, 5, 2)],
      ["n", grid(65, 115, 145, 10, -20, 130, 4, 3)],
      ["n", grid(0, 245, 190, 12, -25, 140, 4, 4)],
      ["n", grid(0, 425, 150, 0, -10, 160, 5, 6)],
      ["n", grid(165, 445, 110, 30, -45, 150, 5, 7)],
      ["m", grid(675, 210, 60, 0, 0, 150, 4, 6)],
      ["n", grid(500, 400, 165, 0, 0, 75, 3, 4)],
      ["n", grid(745, 370, 150, 0, -10, 75, 6, 4)],
      ["m", grid(700, 400, 75, 60, 0, 240, 2, 6)],
      ["m", "M500 150L600 145L595 210M545 210V270M500 210L735 215M610 290H670M520 310L680 330M600 145V200M740 320L850 310L920 440M750 340L920 395M780 370L900 350M780 455H920M880 270L990 290M860 220L990 190M620 90L670 30L710 70"],
      ["n", "M780 430V600M725 370V687M700 500H780M690 600H780M780 610H880M500 470H680M540 470V560M620 470V500M880 610V687M900 560H960M400 240L385 370M430 150V370M385 200H490M385 260H480M390 310H460M395 350H450M70 590V687M0 650H120M160 640H290"],
      ["r", "M680 0L500 130M720 0L530 130M500 130L490 250L455 380L400 540L370 687M460 390L510 480L500 640M215 0L200 200L160 430L100 687M340 140C250 160 200 230 205 310C210 370 250 420 300 480L305 560M0 610L160 620L300 630M685 240V687M380 610L400 660L650 675M660 560L620 640M660 480L510 480M705 0L740 40L820 50"],
      ["s", "M0 90L70 100L260 118L390 130L500 140L700 130L740 145L835 280M0 407H240L460 405L700 385L740 350L850 275M480 0L500 130"],
      ["s", "M900 370L925 430L930 480"],
      ["pr", "M830 285L890 355L915 410M930 560L920 687"],
      ["pr", "M835 280L870 180"],
      ["tr", "M865 190L890 90"],
      ["mw", "M990 170C960 260 960 400 950 687"],
      ["railw", "M372 0L385 130L350 400L325 500L300 687"],
      ["path", "M590 60V200M590 500L600 600M760 430L740 470M680 620V640"],
      ["cycle", "M350 155L270 195L225 230L215 330M345 160L340 400M640 260L590 310L460 370L350 520L320 570L250 680"],
      ["bound", "M395 0L400 110L385 200L340 400L320 560L340 600L330 640L370 670M0 400L340 398"],
    ],
    labels: [
      ["천안대로", 495, 52, 80],
      ["경부본선", 414, 65, 86, 26, "#888"],
      ["동서대로", 12, 96, 4],
      ["봉정로", 180, 261, -82],
      ["중앙로", 473, 287, -78],
      ["터미널2로", 680, 297, 88],
      ["천안대로", 783, 200, 58],
      ["만남로", 888, 113, -77],
      ["만남로", 542, 398, -3],
      ["백석로", 101, 407],
      ["축구센터로", 268, 450, 58],
      ["중절로", 680, 458, 90],
      ["대흥로", 387, 590, -76],
      ["성정로", 204, 627],
      ["중앙로", 499, 660, -88],
      ["성황로", 644, 675],
      ["천안대로", 920, 638, -88],
      ["경부고속도로", 957, 400, -87],
      ["쌍용로", 93, 680, -80],
      ["신부동", 696, 375, 0, 32, "#333"],
      ["성정동", 89, 452, 0, 32, "#333"],
      ["성황동", 514, 613, 0, 32, "#333"],
      ["천안축구", 279, 247, 0, 29, "#2f8d55"],
      ["센터", 281, 287, 0, 29, "#2f8d55"],
      ["천안천", 662, 182, -78, 32, "#5688b8"],
    ],
  },
  {
    x: 1455,
    y: 190,
    areas: [
      [FOREST, "M0 12H150L175 60L200 110L120 120L125 165H190L140 200L80 240L0 270Z"],
      [SCHOOL, "M145 12H300L290 60L270 100L210 135L175 70Z"],
      [BUILDING, "M150 25L185 12L195 20L160 40ZM180 75L215 50L225 60L195 90ZM190 95L230 70L245 85L225 110Z"],
      [SCHOOL, "M120 117L205 125L175 165H120Z"],
      [PITCH, "M173 127L198 122V150L175 153Z"],
      [SCHOOL, "M130 190L205 165L245 200L250 235L190 270L150 250L60 350L0 440V250L80 240Z"],
      [BUILDING, "M150 200L160 190L180 210L170 220ZM200 180L220 190L215 200L200 195ZM195 220L215 210L220 235L205 245ZM20 360L50 335L65 350L35 385ZM0 370L15 385L0 400Z"],
      [PITCH, "M30 270L75 265L70 300L35 310Z"],
      [WATER, "M150 260L190 275L200 330V430L210 460L160 520L130 590H105L0 475V450L95 345Z"],
      [PARK, "M195 280L225 290L205 350L215 400L195 400L200 330Z"],
      [PITCH, "M200 405L225 400L240 430L200 460Z"],
      [PARK, "M150 510L175 505L160 560L125 595Z"],
      [FOREST, "M370 12H560L500 80L440 120L400 90L365 60Z"],
      [SHOPS, "M335 120L400 115L440 90L450 150L380 220L335 190Z"],
      [FOREST, "M660 12H972V690H640L570 610L540 560L520 500L555 380L500 350L345 360L340 400L345 460L305 440L275 430L305 250L360 250L440 295L500 280L490 240L450 200L480 150L540 260L690 300L830 140L920 170V110L850 95L800 70L680 50Z"],
      [LAND, "M830 325L860 318L893 330L885 400L972 370V460L905 440L860 465L800 470L780 510L740 545L690 555L640 610L565 612L540 560L600 525L640 535L620 470L660 500L690 490L698 410L720 450L760 410L790 440L830 415L800 345Z"],
      [LAND, "M640 560L720 535L790 545L820 540L900 580L972 575V610L850 605L835 690H740L650 620Z"],
      [SCHOOL, "M530 90L620 60L660 40L720 60L810 130L830 145L690 290L650 280L520 260Z"],
      [SCHOOL, "M580 12H660L640 60L610 80L530 90Z"],
      [PITCH, "M518 118L562 135L540 180L502 155ZM640 65L675 78L660 113L630 98Z"],
      [BUILDING, "M640 30L660 50L690 60V75L660 60L632 45ZM548 155L572 145L565 170L550 180ZM710 65L780 95L775 112L710 80ZM535 248L575 255V265L535 260ZM590 240L610 225L620 245L600 252ZM610 210H625V225H610ZM660 150L680 160V195L665 200Z"],
      ["#e0e0e6", "M665 95L700 110L690 140L665 130ZM655 205L685 220L670 250L645 240Z"],
      ["#cdebb0", "M550 210L570 190L575 220L555 230ZM615 105L630 100L620 130Z"],
      ["#b5b29c", "M862 110L908 115L905 160L862 155Z"],
      [BLOCKS, "M400 230L445 200L460 260L440 270Z"],
      [SCHOOL, "M345 370L400 375L480 360L550 370L555 400L510 480L520 560L530 570L455 520L345 465Z"],
      [BUILDING, "M460 385H475V400H460ZM495 370L515 360V380ZM420 440H445V450L420 455ZM410 460H440L435 485H410ZM510 395L530 390L525 420ZM375 400H395V415H375ZM490 400H510V420H490ZM478 455H490V495H480ZM360 430H375V445H362ZM505 440H515V475H505Z"],
      [PITCH, "M445 450H475V495H440ZM485 495H510V525H482ZM300 480L325 478V495L305 495Z"],
      ["#cdebb0", "M495 445H510V490H495ZM460 415H485V430H462Z"],
      [SCHOOL, "M455 525L540 550L530 620L560 640L620 650V690H545L520 620L465 600Z"],
      [PITCH, "M470 608L508 605V640H468Z"],
      ["url(#dots)", "M520 610L550 635L600 660V690H545ZM600 650L620 660V690H600Z"],
      [FOREST, "M200 550L245 520L320 570L350 620L370 640V690H180L160 640Z"],
      [FOREST, "M410 640L465 635L520 690H400Z"],
      [SHOPS, "M320 490L450 500L445 550L370 600L310 560Z"],
      [GREY, "M690 565L820 545L830 600L830 650L800 690L730 640L680 600Z"],
      [BUILDING, "M700 570L740 565V590L700 585ZM750 570L820 550V595L750 590ZM770 610L800 640L790 660L760 630Z"],
      [WATER, "M930 400L945 420L935 435L915 420Z"],
    ],
    roads: [
      ["water", "M545 60L535 110L500 140L440 175L390 215L300 225L260 240L220 300M0 600L110 605M230 505L330 540L430 545L590 640M940 390L915 425L830 430L710 490L640 570L590 640"],
      ["path", "M210 135L250 100L280 90M200 290L190 340L200 400M350 370L450 330L450 300L560 290L610 250M730 290L740 210L840 200L890 215L972 190M730 290L780 350L790 440M800 510L850 500L972 525M400 30L450 50L560 30M0 480L110 600M40 320L80 340M550 150L520 210L580 260"],
      ["n", "M260 440L330 520L310 540M265 440L310 460L450 500M275 430L330 450L470 510M290 460L300 520L440 530M330 470L310 530M350 480L340 530M380 480L370 540M410 490L400 540M240 430L280 460M230 240L240 400M340 130L400 100M350 150L400 140M430 170L460 260M400 200L440 230M395 240L425 215M360 370L390 345"],
      ["m", "M670 12L675 40L780 75L815 140L890 155M825 430L830 355L872 358M825 430L910 425M830 390L860 392V410M600 610L630 570L700 510L820 440L920 420L950 390H972M600 610L610 640L680 690M630 580L700 600L790 600L870 585L972 590M330 215L340 160L480 100L560 40L600 30M380 215L350 250L330 240M500 560L450 620V690M680 570L640 590M380 100L400 130L420 180M330 130L330 240M700 600V640"],
      ["t", "M230 505L290 540L340 550L430 540L500 560L600 620M290 210L340 213L400 190L480 140L520 90L590 30L630 50M370 600L340 570L310 550M590 625L650 655L670 690"],
      ["m", "M100 340L150 258L225 285M165 525L215 455M370 600V690M300 570L420 570M0 590L130 600L220 480M260 240L235 310"],
      ["s", "M380 12L310 50L280 95"],
      ["pr", "M290 70L275 120L265 300V380L210 490L125 620L110 640"],
      ["mw", "M320 12L275 400L210 520L202 545"],
      ["bound", "M75 12L0 165M330 60L370 85L410 50L480 12"],
      ["path", "M860 490L900 520"],
    ],
    labels: [
      ["망향로", 273, 156, -86],
      ["망향로", 165, 561, -60],
      ["운암로", 384, 194, -32],
      ["각원사길", 478, 567, 28],
      ["안서동", 634, 347, 0, 32, "#333"],
      ["백석대학", 645, 137, 0, 29, "#6b6326"],
      ["교", 645, 176, 0, 29, "#6b6326"],
      ["단국대학", 57, 244, 0, 29, "#6b6326"],
      ["교 천안캠", 57, 283, 0, 29, "#6b6326"],
      ["퍼스", 57, 322, 0, 29, "#6b6326"],
      ["천호지 근", 117, 408, 0, 29, "#2f8d55"],
      ["린공원", 117, 448, 0, 29, "#2f8d55"],
      ["천안나들목", 134, 620, 0, 29, "#a72b36"],
      ["39", 134, 658, 0, 28, "#a72b36"],
      ["벌명당산", 896, 247, 0, 29, "#8a5a3a"],
      ["257 m", 897, 284, 0, 27, "#8a5a3a"],
      ["왕", 959, 147, 0, 28, "#8a5a3a"],
      ["34", 957, 184, 0, 26, "#8a5a3a"],
    ],
    peaks: [[897, 212]],
    trees: [[42, 30], [99, 95], [33, 178], [122, 200], [810, 28], [944, 122], [803, 160], [367, 332], [513, 298], [740, 360], [645, 398], [903, 338], [560, 432], [313, 408], [930, 443], [570, 545], [240, 586], [837, 518], [736, 548], [905, 632], [465, 682], [630, 300], [958, 262]],
  },
  {
    x: 1455,
    y: 415,
    areas: [
      [FOREST, "M100 0H972V687H660L600 560L560 500L550 540L400 535L360 480L330 420L160 450L20 530L0 480V300L30 200L70 150L150 130L190 140L100 60Z"],
      [LAND, "M360 0H405V60L390 120L360 125ZM160 0H250L270 40L190 50L200 140L150 110L130 60L160 40Z"],
      [LAND, "M0 0H60L40 130L80 170L140 230L120 270L60 220L40 240L60 300L10 330L45 370L0 500Z"],
      ["#eeeed0", "M35 165L70 180L100 215L145 225L140 260L115 265L80 225L35 200Z"],
      [LAND, "M0 540L60 470L100 460L80 530L130 530L140 460L130 400L145 370L200 350L220 315L240 320L230 350L300 340L310 305L345 310L362 335L290 400L240 450L300 430L330 440L350 490L320 520L340 560L400 570L410 520L370 440V415L400 430L410 480L440 535L500 530L540 495L550 540L520 380L530 365L560 440L590 490L600 430L640 400L700 330L760 300L830 320L880 330V370L810 430L860 440L840 470L790 460L700 460L650 470L680 510L790 480L810 560L850 600L860 650L790 687H0Z"],
      [LAND, "M640 0L700 40L740 60L760 250L730 260L720 210L700 185H735L750 170L735 90L700 40H670Z"],
      [PARK, "M780 240L840 200L850 150L880 140L890 175L972 145V160L890 195L880 270L840 310L770 320L740 280Z"],
      ["url(#dots)", "M850 150L880 140L885 185L850 180Z"],
      [WATER, "M760 250L790 245V270L770 280ZM730 300L760 280L770 290L735 315ZM960 410H972V430L957 425Z"],
      [PITCH, "M780 290L800 270L825 285L800 312ZM765 340H810V370L765 368ZM758 517H788V570L758 568ZM885 460L908 457V480L890 485ZM250 670L300 662V687H255Z"],
      [GREY, "M830 225L855 220V255L820 250ZM360 520L400 530L380 570L350 560Z"],
      [BUILDING, "M810 260L835 278L830 288L812 272ZM860 260H890V270H865ZM795 570L815 575V588L800 590ZM910 450H925V480H912Z"],
      ["#cdebb0", "M665 270L690 265L715 300L680 330L665 310Z"],
      ["#c1bbb0", "M310 520L350 515L340 570L310 560Z"],
      [SHOPS, "M235 495L290 480L300 510L250 525Z"],
      [FOREST, "M250 560L300 540V595L240 590Z"],
      [SCHOOL, "M530 0H620L630 70L580 75L575 105L545 100V75L560 60Z"],
      ["url(#dots)", "M550 0H620V60L570 70Z"],
      [SCHOOL, "M240 660L310 650V687H240ZM755 320L780 315V330L755 332Z"],
      [PITCH, "M252 670L300 662V687H255Z"],
      [GREY, "M765 0H810L805 20L785 25Z"],
    ],
    roads: [
      ["water", "M740 290L700 380L660 450L620 490L600 520L560 545L430 570L330 600L190 680"],
      ["path", "M0 530L80 460L140 400L150 340L130 350L60 270M300 270L330 230L440 240L510 200L640 160L760 120L830 110L870 60L972 40M120 340L250 280L310 220M450 240L440 320L370 420M640 160L670 190L720 230L750 280M660 150L720 140M690 480L730 500L780 490L850 560L972 570"],
      ["m", "M200 470L150 460L130 510L60 550L0 555M60 540L120 540L200 520L240 480L350 500M145 380L190 460M225 320L220 380L190 460M200 470L220 520L180 600L170 687M340 345L260 440L240 480M300 450L340 490M320 440L330 490M300 480L350 450M215 590L250 550L340 500M0 650L90 640L150 605L240 600L330 615M80 460L70 540M35 630L30 687L90 660"],
      ["n", "M405 480L420 540L430 560M380 420L400 480M650 470L700 490M490 550L500 530L540 500M545 550L600 600L620 640M580 530L610 550L700 510L790 495M420 575L440 600L530 615L620 630M660 605H740L770 570M750 500L740 600L790 660L850 640L790 590L750 575M660 610L720 615M790 495L800 570L840 640M735 310L780 310M740 335L850 340L880 370L800 440L790 465M690 340L710 440L760 450M690 300L685 330L710 330M815 250L830 220L890 195L972 150M850 280L830 240M530 380L570 490M370 80L380 95L385 60M360 85L375 105M720 380L690 430M880 460L930 450L920 490"],
      ["t", "M180 687L240 650L340 610L410 575L520 560L600 500L620 450L670 410L700 340L750 270L770 200L760 100L715 0M740 280L790 310L850 295L940 290L972 270M440 687L500 640L550 635L610 650L625 687"],
      ["m", "M670 0L665 30L680 40L720 15L750 70L755 120L770 200"],
      ["cycle", "M420 572L580 535L620 490M410 590L330 610L190 672"],
    ],
    labels: [
      ["왕자산", 501, 233, 0, 29, "#8a5a3a"],
      ["252 m", 501, 270, 0, 27, "#8a5a3a"],
      ["유량동", 497, 577, 0, 32, "#333"],
      ["유량로", 485, 655, -38],
      ["태조산길", 376, 590, -33],
      ["중앙로", 325, 662, -80],
      ["원성천", 655, 437, -43, 31, "#4d86b5"],
    ],
    peaks: [[501, 197]],
    trees: [[285, 8], [465, 8], [276, 92], [438, 92], [354, 138], [627, 112], [861, 32], [98, 188], [177, 214], [291, 194], [429, 204], [534, 174], [621, 200], [738, 180], [810, 122], [933, 110], [123, 292], [250, 280], [341, 310], [432, 315], [544, 358], [69, 378], [278, 384], [453, 395], [702, 264], [516, 456], [432, 506], [257, 576], [902, 432], [836, 506], [927, 536], [955, 355], [742, 455], [890, 300], [640, 385]],
  },
  // Interchange where the expressway meets the trunk road.
  {
    x: 1380,
    y: 370,
    areas: [
      ["#cdebb0", "M80 185L100 180L110 220L95 245L75 230ZM315 190L350 160L370 175L350 210H320Z"],
      [BUILDING, "M235 150L250 153V158L236 156ZM190 195H202V204H190Z"],
    ],
    roads: [
      ["n", "M205 210L195 270L150 330M150 260L225 275M205 240L260 230"],
      ["pr", "M345 95L320 108L230 120L185 138L165 160"],
      ["ramp", "M72 90L100 180L125 240M98 190C65 215 62 250 95 252C120 245 128 215 120 190M212 108L190 125L150 150M185 70L115 125"],
      ["mr", "M160 178L215 182L290 200L335 212C378 205 385 165 362 140L365 80M180 182L235 200L262 235M300 195L355 155"],
      ["mr", "M115 180a15 12 0 1 0 30 0a15 12 0 1 0 -30 0"],
      ["tr", "M55 -5L60 50C70 90 105 125 140 145C165 160 160 190 140 225"],
      ["mw", "M432 -5L370 95L310 190L265 260L235 365"],
    ],
    labels: [
      ["만남로", 138, 248, -77],
      ["천안나들목", 274, 242, 0, 29, "#a72b36"],
      ["39", 274, 279, 0, 28, "#a72b36"],
      ["동서고가교", -342, 269, 4],
    ],
  },
];

const shields: { x: number; y: number; w: number; h: number; lines: string[]; fill: string; stroke: string; color: string }[] = [
  { x: 495, y: 324.5, w: 26, h: 17, lines: ["628"], fill: "#eef0cf", stroke: "#b6b78c", color: "#5d5e2b" },
  { x: 591, y: 383, w: 26, h: 17, lines: ["624"], fill: "#eef0cf", stroke: "#b6b78c", color: "#5d5e2b" },
  { x: 1556.5, y: 195.5, w: 15, h: 16.5, lines: ["1"], fill: "#ecccd3", stroke: "#c48b9a", color: "#7a2b43" },
  { x: 1530.5, y: 304.5, w: 21, h: 17.5, lines: ["23"], fill: "#f9e3d0", stroke: "#c7a083", color: "#74502f" },
  { x: 1426.5, y: 577, w: 21, h: 30, lines: ["1", "23"], fill: "#f9e3d0", stroke: "#c7a083", color: "#74502f" },
];

const route: [string, string][] = [
  ["#3300cc", "M839 597L841.500 583L868 588"],
  ["#5c00a3", "M868 588L888 512L895 467L903 420L908.500 393"],
  ["#4200bd", "M908.500 393L929 331"],
  ["#3300cc", "M909 392L929 331L955 250L1017 251.500"],
  ["#5500aa", "M1017 251.500H1041"],
  ["#99005f", "M1041 251.500H1082L1086 250"],
  ["#7b0084", "M1086 250.500L1135 251L1164 252.500"],
  ["#3f00c0", "M1164 252.500L1195 254L1215 256"],
  ["#66009b", "M1215 256L1237 258.500L1241 262"],
];

function MapLabel({ label }: { label: Label }) {
  const [text, x, y, angle = 0, size = 26, color = "#1c1c1c"] = label;
  return (
    <text
      transform={`translate(${x} ${y}) rotate(${angle})`}
      fontSize={size}
      fill={color}
      textAnchor="middle"
      dy="0.36em"
      stroke="rgba(255,255,255,0.65)"
      strokeWidth={4}
      strokeLinejoin="round"
      paintOrder="stroke"
    >
      {text}
    </text>
  );
}

function RiskMap() {
  const place = (t: Tile) => `translate(${t.x} ${t.y}) scale(0.33333)`;
  return (
    <svg
      viewBox="482 194 1297 450"
      className="block h-[450px] w-[1297px] font-['Noto_Sans','Noto_Sans_CJK_KR',sans-serif]"
      role="img"
    >
      <defs>
        <pattern id="blocks" width="34" height="22" patternUnits="userSpaceOnUse" patternTransform="rotate(3)">
          <rect width="34" height="22" fill="#e0dfdf" />
          <path d="M4 6h20M14 16h16" stroke="#cfc5be" strokeWidth="3.500" />
        </pattern>
        <pattern id="chevrons" width="32" height="26" patternUnits="userSpaceOnUse" patternTransform="rotate(4)">
          <rect width="32" height="26" fill="#e0dfdf" />
          <path d="M7 7l7 6l8-6" fill="none" stroke="#cbc0b8" strokeWidth="4" />
        </pattern>
        <pattern id="shops" width="22" height="18" patternUnits="userSpaceOnUse" patternTransform="rotate(6)">
          <rect width="22" height="18" fill="#ebe8e4" />
          <path d="M3 4h7v6h-7zM14 9h5v6h-5z" fill="#d9cfc8" />
        </pattern>
        <pattern id="dots" width="17" height="15" patternUnits="userSpaceOnUse" patternTransform="rotate(14)">
          <path d="M1 2h5M10 8v5M3 11h3M13 3h3" stroke="#f4958a" strokeWidth="2.200" />
        </pattern>
        <g id="tree" fill="none" stroke="#8fb582" strokeWidth="2.400">
          <circle cx="-7" cy="-6" r="6.500" />
          <path d="M-7 0V13M-12 13H-3M8-12L1 5H14ZM8 5V13" />
        </g>
      </defs>
      <rect x="482" y="194" width="1297" height="450" fill={LAND} />
      {tiles.map((t, i) => (
        <g key={i} transform={place(t)}>
          {t.areas.map(([fill, d], j) => (
            <path key={j} d={d} fill={fill} />
          ))}
          {(t.trees ?? []).map(([x, y], j) => (
            <use key={j} href="#tree" x={x} y={y} />
          ))}
        </g>
      ))}
      {kinds.map((k) => (
        <g key={k.id} fill="none" strokeLinejoin="round">
          {k.casing &&
            tiles.map((t, i) => (
              <g key={i} transform={place(t)} stroke={k.casing} strokeWidth={k.cw}>
                {t.roads.filter((r) => r[0] === k.id).map((r, j) => (
                  <path key={j} d={r[1]} />
                ))}
              </g>
            ))}
          {tiles.map((t, i) => (
            <g key={i} transform={place(t)} stroke={k.color} strokeWidth={k.w} strokeDasharray={k.dash}>
              {t.roads.filter((r) => r[0] === k.id).map((r, j) => (
                <path key={j} d={r[1]} />
              ))}
            </g>
          ))}
          {k.id.startsWith("rail") &&
            tiles.map((t, i) => (
              <g key={i} transform={place(t)} stroke="#e8e8e8">
                {t.roads.filter((r) => r[0] === k.id).map((r, j) => (
                  <React.Fragment key={j}>
                    <path d={r[1]} strokeWidth={k.w * 0.7} strokeDasharray="14 16" />
                    <path d={r[1]} strokeWidth={k.w * 0.5} stroke="#6d6d6d" />
                    <path d={r[1]} strokeWidth={k.w * 0.14} strokeDasharray="16 14" strokeDashoffset={9} />
                  </React.Fragment>
                ))}
              </g>
            ))}
        </g>
      ))}
      {tiles.map((t, i) => (
        <g key={i} transform={place(t)}>
          {(t.peaks ?? []).map(([x, y], j) => (
            <path key={j} d={`M${x} ${y - 10}l12 19h-24z`} fill="#d08f55" />
          ))}
          {t.labels
            .filter((l) => !(t.x === 1130 && t.y === 415 && l[0] === "만남로" && l[1] === 888))
            .map((l, j) => (
              <MapLabel key={j} label={l} />
            ))}
        </g>
      ))}
      {shields.map((s, i) => (
        <g key={i}>
          <rect x={s.x} y={s.y} width={s.w} height={s.h} rx="1.500" fill={s.fill} stroke={s.stroke} />
          {s.lines.map((line, j) => (
            <text key={j} x={s.x + s.w / 2} y={s.y + 12.3 + j * 12.2} fontSize="10" textAnchor="middle" fill={s.color}>
              {line}
            </text>
          ))}
        </g>
      ))}
      <g fill="none" strokeWidth="4.800" strokeLinejoin="round">
        {route.map(([color, d], i) => (
          <path key={i} d={d} stroke={color} />
        ))}
      </g>
      <circle cx="1757" cy="622" r="12" fill="#fff" fillOpacity="0.6" />
      <path d="M1748 622h19v11h-14z" fill="#fff" />
      <path d="M1762 625h7v5h-7z" fill="#111" />
      <circle cx="1757" cy="622" r="7.600" fill="#333" />
      <path d="M1755.500 620.500h2.500v5M1755 625.800h5" stroke="#fff" strokeWidth="2" />
      <circle cx="1757" cy="617.600" r="1.400" fill="#fff" />
    </svg>
  );
}

function Radio({ label, checked = false }: { label: string; checked?: boolean }) {
  return (
    <label className="flex h-7 items-center gap-[10px]">
      <span
        className={
          checked
            ? "flex size-[19px] items-center justify-center rounded-full bg-[#0079c1]"
            : "size-[19px] rounded-full border border-[#868e96] bg-white"
        }
      >
        {checked && <span className="size-[9px] rounded-full bg-white" />}
      </span>
      <span>{label}</span>
    </label>
  );
}

function Select({ value }: { value: string }) {
  return (
    <div className="flex h-full w-[300px] items-center justify-between rounded-[2px] border border-[#868e96] bg-white pr-[11px] pl-[12px] text-[15px]">
      <span>{value}</span>
      <ChevronDown size={18} strokeWidth={2.4} className="text-[#343a46]" />
    </div>
  );
}

export default function App() {
  return (
    <div className="h-[873px] w-full overflow-hidden bg-white font-['Noto_Sans_CJK_KR',sans-serif] text-base text-[#212529]">
      <div className="h-[6px] border-b border-[#cdae91] bg-[#ffdeb5]" />
      <h1 className="h-[68px] text-center text-[33.5px] leading-[38px] font-normal [word-spacing:1.6px]">
        안전한 야간운전 위험구역 시각화
      </h1>
      <main className="flex">
        <aside className="w-[480px] shrink-0 pl-[2px] [word-spacing:0.6px]">
          <div className="mt-1 h-[18px] leading-[19px]">구분</div>
          <Radio label="위험요소" />
          <Radio label="위험구역 및 안전구역" />
          <Radio label="경로 위험도" checked />
          <div className="mt-3 h-6 leading-6">출발지</div>
          <div className="mt-[10px] h-[37px]">
            <Select value="천안터미널" />
          </div>
          <div className="mt-[15px] h-6 leading-6">도착지</div>
          <div className="mt-[9px] h-[36px]">
            <Select value="백석대" />
          </div>
        </aside>
        <div className="ml-[2px] shrink-0 pt-[120px]">
          <RiskMap />
        </div>
        <ul className="ml-[31px] pt-[125px] text-[12px] text-[#2a3f5f]">
          <li className="flex h-[19px] items-center gap-[5px] whitespace-nowrap">
            <span className="h-1 w-[30px] bg-[#ff0000]" />
            최고 위험
          </li>
          <li className="flex h-[19px] items-center gap-[5px] whitespace-nowrap">
            <span className="h-1 w-[30px] bg-[#0000ff]" />
            최저 위험
          </li>
        </ul>
      </main>
    </div>
  );
}
